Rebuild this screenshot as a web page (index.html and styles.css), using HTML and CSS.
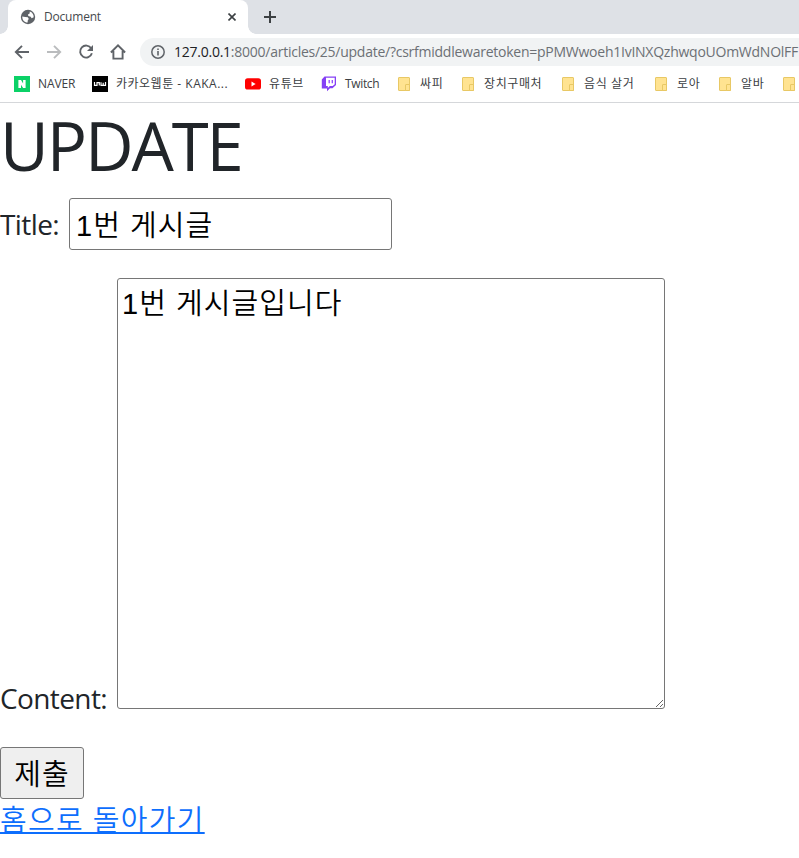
FILE: index.html
```html
<!DOCTYPE html>
<html lang="ko">
<head>
<meta charset="utf-8">
<title>Document</title>
<link rel="stylesheet" href="styles.css">
</head>
<body>
<header class="browser">
  <div class="tabs">
    <div class="tab">
      <svg class="globe" viewBox="0 0 16 16"><circle cx="8" cy="8" r="7.2" fill="#5f6368"/><path d="M2.3 7.4 5.2 8.1 7.8 8.3 8.8 10 7.8 11.2 7.6 13.6C4.3 13.4 2.1 10.8 2.3 7.4ZM9.8 2.4C12.3 3.2 13.8 5.4 13.7 8.2L11.6 9.3 10.7 7.8 8.3 7 8 5.4 9.6 4.6Z" fill="#fff"/></svg>
      <span class="tab-title">Document</span>
      <svg class="close" viewBox="0 0 8 8"><path d="M.5.5 7.5 7.5M7.5.5.5 7.5" stroke="#3c4043" stroke-width="1.6"/></svg>
    </div>
    <svg class="plus" viewBox="0 0 12 12"><path d="M6 0V12M0 6H12" stroke="#3c4043" stroke-width="2"/></svg>
  </div>
  <div class="toolbar">
    <svg class="nav" viewBox="0 0 16 16"><path d="M15 8H2M8 1.8 1.8 8 8 14.2" fill="none" stroke="#5f6368" stroke-width="1.9"/></svg>
    <svg class="nav" viewBox="0 0 16 16"><path d="M1 8H14M8 1.8 14.2 8 8 14.2" fill="none" stroke="#babcbe" stroke-width="1.9"/></svg>
    <svg class="nav" viewBox="0 0 16 16"><path d="M13.2 4.3A6 6 0 1 0 13.9 9.3" fill="none" stroke="#5f6368" stroke-width="1.9"/><path d="M15 1V7H9Z" fill="#5f6368"/></svg>
    <svg class="nav" viewBox="0 0 16 16"><path d="M.9 8.5 8 1.4 15.1 8.5M3.4 7V14.6H12.6V7" fill="none" stroke="#5f6368" stroke-width="1.9"/></svg>
    <div class="address">
      <svg class="info" viewBox="0 0 14 14"><circle cx="7" cy="7" r="6.2" fill="none" stroke="#5f6368" stroke-width="1.5"/><path d="M7 6V10.5M7 3.4V5" stroke="#5f6368" stroke-width="1.6"/></svg>
      <span class="url"><span class="host">127.0.0.1</span>:8000/articles/25/update/?csrfmiddlewaretoken=pPMWwoeh1IvINXQzhwqoUOmWdNOlFF</span>
    </div>
  </div>
  <nav class="bookmarks">
    <a class="bookmark naver"><svg viewBox="0 0 16 16"><path d="M0 0H16V16H0Z" fill="#0bd167"/><path d="M4.4 4H7L9.1 7.4V4H11.6V12H9.1L7 8.7V12H4.4Z" fill="#fff"/></svg><span>NAVER</span></a>
    <a class="bookmark kakao"><svg viewBox="0 0 16 16"><path d="M0 0H16V16H0Z"/><path d="M2.5 6V9.3H5V6.7H7.3V9.6M9 6.3V9.3H11.2V6.7M11.2 9.3H13.5V6" fill="none" stroke="#fff" stroke-width="1.2"/></svg><span>카카오웹툰 - KAKA...</span></a>
    <a class="bookmark youtube"><svg viewBox="0 0 16 16"><rect y="2.3" width="16" height="11.3" rx="2.7" fill="#f00"/><path d="M6.5 5.6 10.6 8 6.5 10.4Z" fill="#fff"/></svg><span>유튜브</span></a>
    <a class="bookmark twitch"><svg viewBox="0 0 16 16"><path d="M3.5 .5H15V9L11.5 12.3H9L6 15.3V12.6H.8V3.5Z" fill="#8540f5"/><path d="M5 1.8H13.7V8.2L11.7 10H8.8L6.8 12V10H5Z" fill="#fff"/><path d="M8.2 4V7.3M11.3 4V7.3" stroke="#9146ff" stroke-width="1.3"/></svg><span>Twitch</span></a>
    <a class="bookmark b1"><i class="folder"></i><span>싸피</span></a>
    <a class="bookmark b2"><i class="folder"></i><span>장치구매처</span></a>
    <a class="bookmark b3"><i class="folder"></i><span>음식 살거</span></a>
    <a class="bookmark b4"><i class="folder"></i><span>로아</span></a>
    <a class="bookmark b5"><i class="folder"></i><span>알바</span></a>
    <a class="bookmark b6"><i class="folder"></i></a>
  </nav>
</header>
<main>
  <h1>UPDATE</h1>
  <form>
    <div class="row title-row"><label for="title">Title:</label><input id="title" value="1번 게시글"></div>
    <div class="row content-row"><label for="content">Content:</label><textarea id="content" spellcheck="false">1번 게시글입니다</textarea></div>
    <button type="button">제출</button>
  </form>
  <a class="home" href="#">홈으로 돌아가기</a>
</main>
</body>
</html>
```

FILE: styles.css
```css
* { box-sizing: border-box; }
body { margin: 0; background: #fff; color: #212529; font-family: "Open Sans", "Noto Sans CJK KR", sans-serif; overflow: hidden; height: 858px; }
svg { display: block; flex: none; }
.browser { height: 103px; border-bottom: 1px solid #d5d7da; overflow: hidden; }
.tabs { height: 34px; background: #dee1e6; padding-left: 8px; display: flex; align-items: center; }
.tab { position: relative; width: 240px; height: 34px; background: #fff; border-radius: 8px 8px 0 0; display: flex; align-items: center; padding: 0 12px; }
.tab::before, .tab::after { content: ""; position: absolute; bottom: 0; width: 8px; height: 8px; }
.tab::before { right: 100%; background: radial-gradient(circle at 0 0, transparent 7.5px, #fff 8px); }
.tab::after { left: 100%; background: radial-gradient(circle at 100% 0, transparent 7.5px, #fff 8px); }
.globe { width: 16px; height: 16px; }
.tab-title { font-size: 12px; color: #45494d; margin: -2px 0 0 8px; flex: 1; letter-spacing: -.2px; }
.close { width: 8px; height: 8px; }
.plus { width: 12px; height: 12px; margin-left: 16px; }
.toolbar { height: 36px; display: flex; align-items: center; padding-left: 14px; gap: 16px; }
.nav { width: 16px; height: 16px; }
.address { margin-left: -2px; height: 28px; flex: 1; min-width: 0; overflow: hidden; background: #f1f3f4; border-radius: 14px 0 0 14px; display: flex; align-items: center; padding-left: 11px; }
.info { width: 14px; height: 14px; margin-right: 9px; }
.url { margin-top: -2px; font-size: 14px; letter-spacing: -.25px; white-space: nowrap; color: #6c7075; }
.host { color: #202124; }
.bookmarks { height: 28px; display: flex; align-items: center; padding-left: 14px; }
.bookmark { display: flex; align-items: center; flex: none; height: 24px; gap: 8px; font-size: 12px; letter-spacing: .6px; color: #3c4043; white-space: nowrap; }
.bookmark span { position: relative; top: -1px; }
.bookmark svg { width: 16px; height: 16px; }
.naver { width: 78px; letter-spacing: -.1px; }
.kakao { width: 153px; letter-spacing: .5px; }
.youtube { width: 76px; }
.twitch { width: 77px; letter-spacing: -.35px; }
.b1, .b4, .b5 { width: 64px; }
.b2 { width: 100px; }
.b3 { width: 93px; }
.b6 { width: 12px; }
.bookmark:not(.b6) .folder { margin-right: 2px; }
.folder { width: 12px; height: 14px; flex: none; background: #ffe391; border: 1px solid #e8c865; border-radius: 1px; position: relative; }
.folder::after { content: ""; position: absolute; right: -1px; bottom: -1px; width: 3px; height: 5px; background: #ffe391; border: 1px solid #e8c865; border-radius: 1px 1px 0 0; }
main { font-size: 28px; font-weight: 400; }
h1 { margin: 0; height: 95px; line-height: 85px; font-size: 67px; font-weight: 400; letter-spacing: -2.1px; }
.row { display: flex; }
.title-row { height: 52px; align-items: center; gap: 9px; }
.content-row { height: 431px; margin-top: 28px; align-items: flex-end; gap: 10px; }
label { flex: none; white-space: nowrap; line-height: 38px; letter-spacing: -.6px; }
.title-row label { width: 60px; }
.content-row label { width: 107px; height: 21px; line-height: 20px; }
input, textarea, button { margin: 0; color: #000; border: 1px solid #767676; border-radius: 3px; font-family: "Liberation Sans", "Noto Sans CJK KR", sans-serif; font-size: 29px; font-weight: 350; letter-spacing: 1.05px; }
input { width: 323px; height: 52px; padding: 0 6px 2px; background: #fff; }
textarea { width: 548px; height: 431px; padding: 4px; line-height: 42px; background: #fff; }
button { display: block; margin-top: 38px; width: 84px; height: 52px; padding: 0 0 3px; background: #efefef; }
.home { display: block; height: 42px; line-height: 42px; color: #0d6efd; font-size: 29px; font-weight: 350; letter-spacing: 1.3px; width: max-content; text-decoration: underline; text-decoration-thickness: 2px; }
```
